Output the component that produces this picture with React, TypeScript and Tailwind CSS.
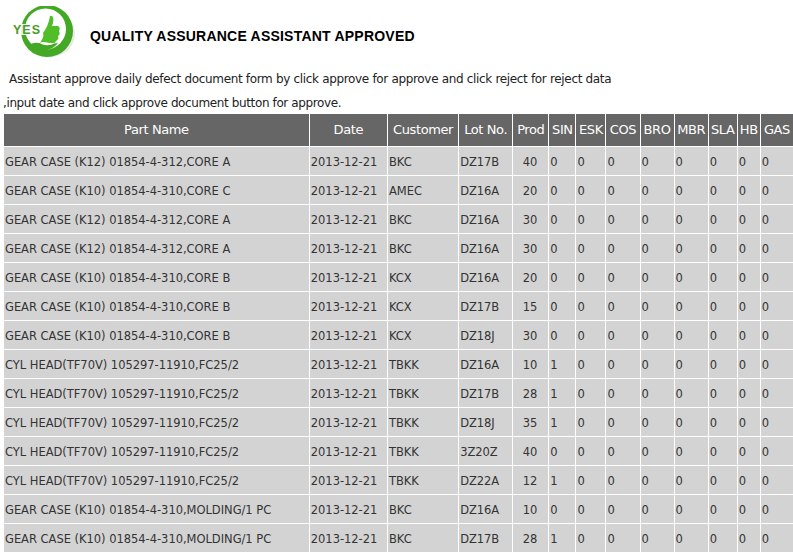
const cols = [304, 77, 70, 53, 35, 26, 29, 33, 33, 33, 28, 22, 32];
const heads = ["Part Name", "Date", "Customer", "Lot No.", "Prod", "SIN", "ESK", "COS", "BRO", "MBR", "SLA", "HB", "GAS"];
const K12 = "GEAR CASE (K12) 01854-4-312,CORE A";
const K10B = "GEAR CASE (K10) 01854-4-310,CORE B";
const CYL = "CYL HEAD(TF70V) 105297-11910,FC25/2";
const MOLD = "GEAR CASE (K10) 01854-4-310,MOLDING/1 PC";
const rows: [string, string, string, number, number][] = [
  [K12, "BKC", "DZ17B", 40, 0],
  ["GEAR CASE (K10) 01854-4-310,CORE C", "AMEC", "DZ16A", 20, 0],
  [K12, "BKC", "DZ16A", 30, 0],
  [K12, "BKC", "DZ16A", 30, 0],
  [K10B, "KCX", "DZ16A", 20, 0],
  [K10B, "KCX", "DZ17B", 15, 0],
  [K10B, "KCX", "DZ18J", 30, 0],
  [CYL, "TBKK", "DZ16A", 10, 1],
  [CYL, "TBKK", "DZ17B", 28, 1],
  [CYL, "TBKK", "DZ18J", 35, 1],
  [CYL, "TBKK", "3Z20Z", 40, 0],
  [CYL, "TBKK", "DZ22A", 12, 1],
  [MOLD, "BKC", "DZ16A", 10, 0],
  [MOLD, "BKC", "DZ17B", 28, 1],
];

function Logo() {
  return (
    <svg width="66" height="52" viewBox="12 6 66 52" className="block">
      <ellipse cx="50" cy="34" rx="25" ry="23" fill="#e8e8e8" />
      <circle cx="47" cy="31" r="26" fill="#43a823" />
      <circle cx="45.500" cy="29" r="20.500" fill="#fff" />
      <path d="M28 46 C34 40 41 44 48 44 L58 43 C54 48 48 51 42 50 C37 50 32 49 28 46 Z" fill="#43a823" />
      <path d="M50 16 C53 15 54 19 53 23 L52 26 L58 26 C60 27 60 30 59 31 C60 33 60 35 58 36 C59 38 58 40 56 41 C55 43 54 44 52 44 L46 44 C44 42 42 42 40 43 C43 38 44 36 43 33 C46 29 49 23 50 16 Z" fill="#4fbe28" />
      <path d="M40 43 C44 41 47 43 50 43 L55 43 C50 46 44 46 40 43 Z" fill="#fff" />
      <path d="M13 24 L41 24 L41 35 L13 35 Z" fill="#fff" fillOpacity="0.85" />
      <text x="13" y="34" fontFamily="Liberation Sans, sans-serif" fontWeight="700" fontSize="12.500" fill="#4a9c2a" textLength="27">YES</text>
    </svg>
  );
}

const td = "p-0 pt-[3px] pl-[1px] bg-[#d3d3d3] text-[#333] text-[11.5px] tracking-[-0.03px] whitespace-nowrap border-b border-r border-white";

export default function App() {
  return (
    <div className="w-[793px] h-[553px] overflow-hidden bg-white font-['DejaVu_Sans',sans-serif]">
      <div className="flex items-start pl-[12px] pt-[6px] h-[59px]">
        <Logo />
        <h1 className="ml-[12px] mt-[21px] text-[14px] tracking-[0.22px] leading-[18px] font-bold text-black font-['Liberation_Sans',sans-serif]">
          QUALITY ASSURANCE ASSISTANT APPROVED
        </h1>
      </div>
      <p className="mt-[10px] pl-[9px] text-[12px] tracking-[-0.33px] leading-[20px] text-[#222] whitespace-nowrap">
        Assistant approve daily defect document form by click approve for approve and click reject for reject data
      </p>
      <p className="mt-[4px] pl-[3px] text-[12px] tracking-[-0.38px] leading-[20px] text-[#222] whitespace-nowrap">
        ,input date and click approve document button for approve.
      </p>
      <table className="ml-[4px] mt-[1px] table-fixed border-separate border-spacing-0 w-[789px]">
        <colgroup>
          {cols.map((w, i) => (
            <col key={i} style={{ width: w + (i < 12 ? 1 : 0) }} />
          ))}
        </colgroup>
        <thead>
          <tr>
            {heads.map((h) => (
              <th
                key={h}
                className="h-[33px] p-0 bg-[#666666] text-white text-[13px] tracking-[-0.4px] font-normal text-center whitespace-nowrap border-b border-r border-white last:border-r-0"
              >
                {h}
              </th>
            ))}
          </tr>
        </thead>
        <tbody>
          {rows.map((r, i) => (
            <tr key={i}>
              <td className={`h-[29px] ${td}`}>{r[0]}</td>
              <td className={td}>2013-12-21</td>
              <td className={td}>{r[1]}</td>
              <td className={td}>{r[2]}</td>
              <td className="p-0 pt-[3px] pr-[11px] text-right bg-[#d3d3d3] text-[#333] text-[11.5px] tracking-[-0.03px] whitespace-nowrap border-b border-r border-white">{r[3]}</td>
              <td className={td}>{r[4]}</td>
              {[0, 0, 0, 0, 0, 0, 0].map((v, j) => (
                <td key={j} className={`${td} last:border-r-0`}>{v}</td>
              ))}
            </tr>
          ))}
        </tbody>
      </table>
    </div>
  );
}
